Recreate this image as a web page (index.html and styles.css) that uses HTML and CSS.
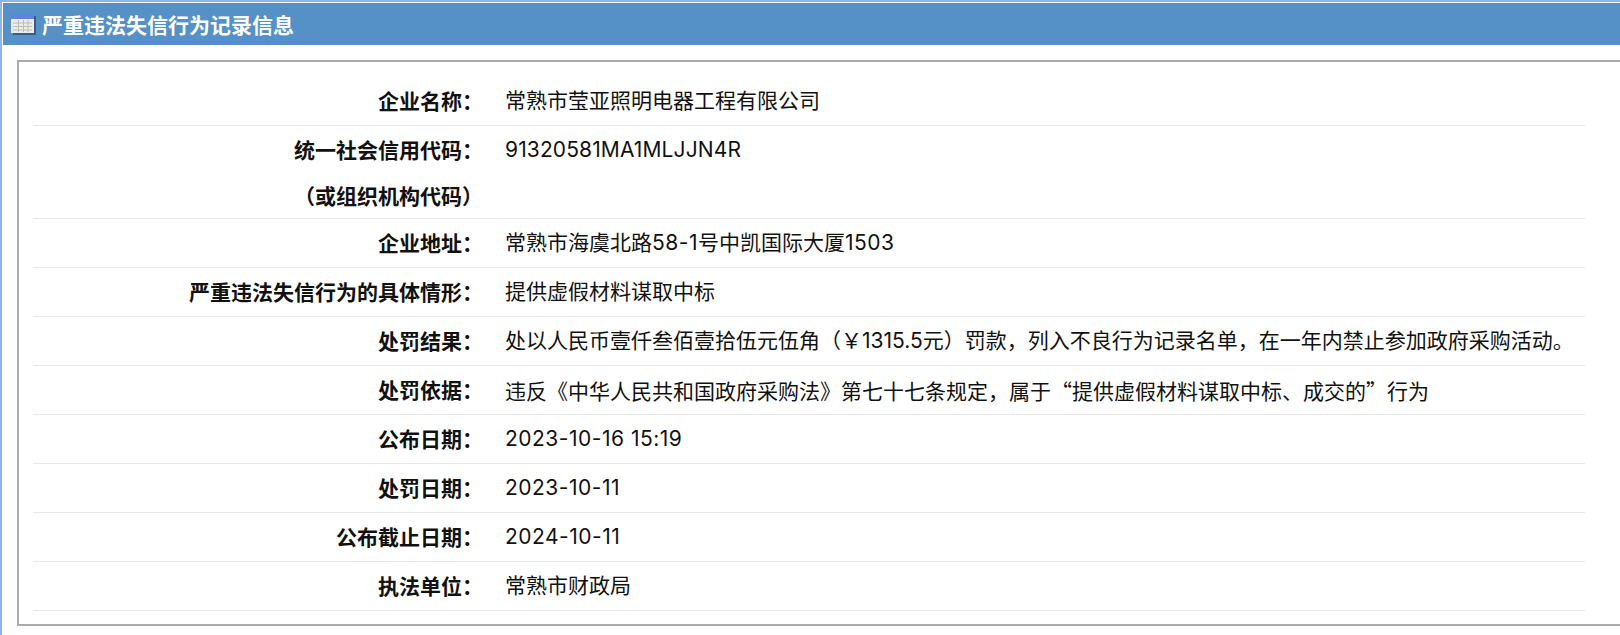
FILE: index.html
```html
<!DOCTYPE html>
<html lang="zh-CN">
<head>
<meta charset="utf-8">
<title>严重违法失信行为记录信息</title>
<link rel="stylesheet" href="styles.css">
</head>
<body>
<div class="page">
  <header class="title-bar">
    <svg class="title-icon" width="25" height="21" viewBox="0 0 25 21" aria-hidden="true">
      <rect x="2" y="2" width="23" height="19" fill="#3f5a7e"/>
      <rect x="0" y="0" width="23" height="19" fill="#ecece8"/>
      <rect x="0" y="0" width="23" height="5" fill="#5b86de"/>
      <path d="M2 9H21M2 12.500H21M2 16H21M7.500 6V18M12.500 6V18M17 6V18" stroke="#bdbdb8" stroke-width="1" fill="none"/>
    </svg>
    <h1 class="title-text">严重违法失信行为记录信息</h1>
  </header>
  <main class="content">
    <div class="panel">
      <table class="info-table">
        <tbody>
          <tr><th>企业名称：</th><td>常熟市莹亚照明电器工程有限公司</td></tr>
          <tr class="tall"><th>统一社会信用代码：<br>（或组织机构代码）</th><td><span class="code">91320581MA1MLJJN4R</span></td></tr>
          <tr><th>企业地址：</th><td>常熟市海虞北路<span class="num">58-1</span>号中凯国际大厦<span class="num">1503</span></td></tr>
          <tr><th>严重违法失信行为的具体情形：</th><td>提供虚假材料谋取中标</td></tr>
          <tr><th>处罚结果：</th><td>处以人民币壹仟叁佰壹拾伍元伍角（￥1315.5元）罚款，列入不良行为记录名单，在一年内禁止参加政府采购活动。</td></tr>
          <tr><th>处罚依据：</th><td>违反《中华人民共和国政府采购法》第七十七条规定，属于<span class="cjk">“</span>提供虚假材料谋取中标、成交的<span class="cjk">”</span>行为</td></tr>
          <tr><th>公布日期：</th><td><span class="num">2023-10-16 15:19</span></td></tr>
          <tr><th>处罚日期：</th><td><span class="num">2023-10-11</span></td></tr>
          <tr><th>公布截止日期：</th><td><span class="num">2024-10-11</span></td></tr>
          <tr><th>执法单位：</th><td>常熟市财政局</td></tr>
        </tbody>
      </table>
    </div>
  </main>
</div>
</body>
</html>
```
FILE: styles.css
```css
html, body {
  margin: 0;
  padding: 0;
  height: 100%;
  overflow: hidden;
  background: #fff;
}
body {
  font-family: "Noto Sans CJK SC", sans-serif;
  color: #111;
}
.page {
  height: 635px;
  box-sizing: border-box;
  background: #fff;
  border-top: 2px solid #8fb5ea;
  border-left: 2px solid #8fb5ea;
  padding: 1px 0 0 1px;
}
.title-bar {
  height: 42px;
  background: #5590c6;
  display: flex;
  align-items: center;
  gap: 6px;
  padding-left: 8px;
}
.title-icon { flex: none; }
.title-text {
  margin: 0;
  color: #fff;
  font-size: 21px;
  font-weight: 700;
  line-height: 42px;
}
.content {
  padding: 15px 0 0 14px;
  width: 1640px;
}
.panel {
  border: 2px solid #aaa;
  height: 566px;
  box-sizing: border-box;
  padding: 15px 0 0 14px;
  width: 1640px;
}
.info-table {
  border-collapse: separate;
  border-spacing: 0;
  width: 1552px;
  font-size: 21px;
}
.info-table tr { height: 49px; }
.info-table th,
.info-table td {
  vertical-align: top;
  border-bottom: 1px solid #e8e8e8;
  padding: 0;
}
.info-table th {
  width: 450px;
  text-align: right;
  font-weight: 700;
  line-height: 45.5px;
  padding-top: 1px;
}
.info-table td {
  padding: 4px 0 0 22px;
  line-height: 40px;
  white-space: nowrap;
  font-family: Inter, "Noto Sans CJK SC", sans-serif;
}
.cjk { font-family: "Noto Sans CJK SC", sans-serif; }
.num { letter-spacing: 0.5px; }
.code { letter-spacing: 0.12px; }
```
